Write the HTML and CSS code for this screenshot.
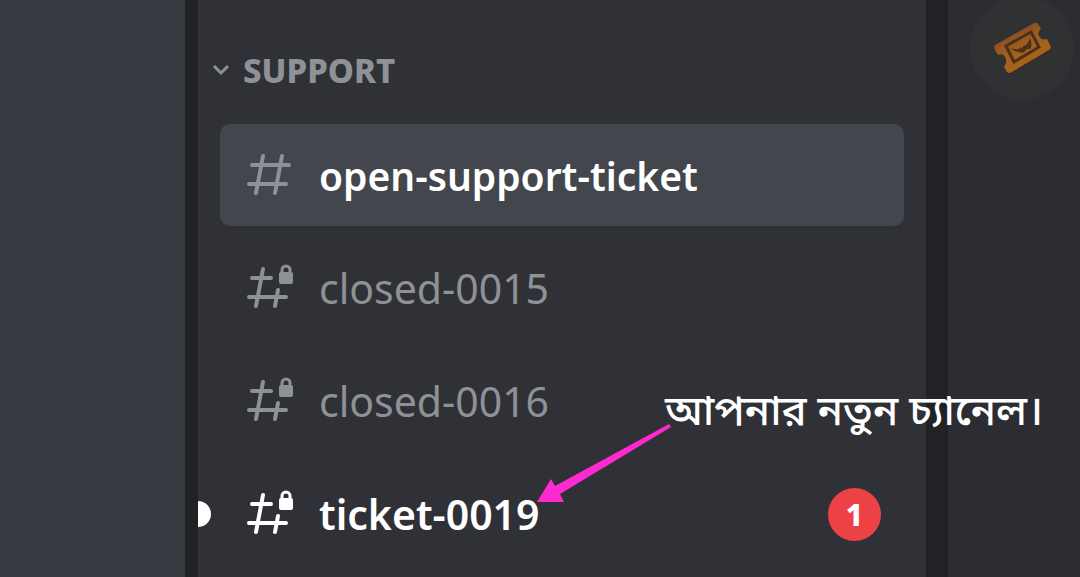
FILE: index.html
```
<!DOCTYPE html>
<html lang="bn">
<head>
    <meta charset="UTF-8">
    <meta name="viewport" content="width=device-width, initial-scale=1.0">
    <title>Support</title>
    <link rel="stylesheet" href="styles.css">
</head>
<body>
    <svg class="symbols" aria-hidden="true">
        <symbol id="hash" viewBox="0 0 48 48">
            <path d="M16 5L9 42M35 5L28 42M5 14H42M2 33H39" />
        </symbol>
        <symbol id="hash-lock" viewBox="0 0 48 48">
            <path d="M16 5L9 42M31 26L28 42M5 14H24M2 33H39" />
            <path d="M35 10V6a4 4 0 0 1 8 0v4" stroke-width="3" />
            <rect x="32" y="8" width="14" height="12" rx="2" fill="currentColor" stroke="none" />
        </symbol>
    </svg>

    <div class="app">
        <div class="servers"></div>

        <nav class="channels">
            <button class="category" type="button">
                <svg class="chevron" viewBox="0 0 18 12"><path d="M2 2L9 9L16 2" /></svg>
                SUPPORT
            </button>

            <a href="#" class="channel active">
                <svg class="icon"><use href="#hash" /></svg>
                <span class="name">open-support-ticket</span>
            </a>
            <a href="#" class="channel">
                <svg class="icon"><use href="#hash-lock" /></svg>
                <span class="name">closed-0015</span>
            </a>
            <a href="#" class="channel">
                <svg class="icon"><use href="#hash-lock" /></svg>
                <span class="name">closed-0016</span>
            </a>
            <a href="#" class="channel unread">
                <svg class="icon"><use href="#hash-lock" /></svg>
                <span class="name">ticket-0019</span>
                <span class="badge">1</span>
            </a>

            <!-- Note that points to the new channel -->
            <div class="note">
                <p class="note-text">আপনার নতুন চ্যানেল।</p>
                <svg class="arrow" viewBox="0 0 134 78"><path d="M0 78L14 55L18 62L132 0L134 3L23 70L27 78Z" /></svg>
            </div>
        </nav>

        <div class="chat">
            <svg class="logo" viewBox="0 0 104 104">
                <defs>
                    <linearGradient id="ticket" x1="0.3" y1="0.1" x2="0.6" y2="0.6">
                        <stop offset="0" stop-color="#7d442b" />
                        <stop offset="0.5" stop-color="#9a5a20" />
                        <stop offset="1" stop-color="#a3631b" />
                    </linearGradient>
                </defs>
                <circle cx="52" cy="52" r="52" fill="#2f3133" />
                <path d="M25 49L64 27Q67 26 68 28L71 33Q67 36 69 40Q72 45 77 43L81 51Q81 53 79 54L42 76Q39 78 37 76L34 71Q38 66 35 61Q33 57 28 59L24 52Q24 50 25 49Z" fill="#3b2a1e" transform="translate(1 1)" />
                <path d="M25 49L64 27Q67 26 68 28L71 33Q67 36 69 40Q72 45 77 43L81 51Q81 53 79 54L42 76Q39 78 37 76L34 71Q38 66 35 61Q33 57 28 59L24 52Q24 50 25 49Z" fill="url(#ticket)" />
                <path d="M36 50L61 36L69 51L44 66Z" fill="none" stroke="#4d3019" stroke-width="3" />
                <path d="M40 52Q46 54 49 53L50 51L52 53L53 50Q58 49 60 42Q63 50 60 53L57 53L53 57L48 56Q44 55 40 52Z" fill="#4d3019" />
            </svg>
        </div>
    </div>
</body>
</html>
```
FILE: styles.css
```
body {
    margin: 0;
    font-family: "Noto Sans", "Noto Sans Bengali", sans-serif;
    background-color: #2c2d32;
    color: #8e9196;
}
.symbols {
    position: absolute;
    width: 0;
    height: 0;
}
.app {
    display: grid;
    grid-template-columns: 185px 1fr 132px;
    min-height: 100vh;
}
.servers {
    background-color: #36393f;
}
.channels {
    position: relative;
    box-sizing: border-box;
    padding: 46px 22px 0;
    border-left: 13px solid #212226;
    border-right: 22px solid #212226;
    background-color: #303136;
}
.category {
    display: flex;
    align-items: center;
    gap: 13px;
    height: 48px;
    margin: 0 0 30px -8px;
    padding: 0;
    border: none;
    background: none;
    color: #8e9196;
    font: 800 33px "Noto Sans", sans-serif;
    cursor: pointer;
}
.chevron {
    width: 18px;
    height: 12px;
    fill: none;
    stroke: #8e9196;
    stroke-width: 3;
}
.channel {
    position: relative;
    display: flex;
    align-items: center;
    gap: 24px;
    box-sizing: border-box;
    height: 102px;
    margin-bottom: 11px;
    padding: 0 23px 0 27px;
    border-radius: 10px;
    color: #8e9196;
    font-size: 41px;
    text-decoration: none;
}
.channel:last-of-type {
    margin-bottom: 0;
}
.active {
    background-color: #43474d;
}
.icon {
    width: 48px;
    height: 48px;
    color: #8e9196;
    fill: none;
    stroke: currentColor;
    stroke-width: 4;
    stroke-linecap: round;
}
.name {
    flex: 1;
}
.active .name, .unread .name {
    color: #fff;
    font-weight: 600;
}
.active .name {
    font-size: 39px;
}
.unread .icon {
    color: #fff;
}
.unread::before {
    content: "";
    position: absolute;
    left: -22px;
    width: 13px;
    height: 26px;
    border-radius: 0 13px 13px 0;
    background-color: #fff;
}
.badge {
    width: 53px;
    border-radius: 50%;
    background-color: #ed4245;
    color: #fff;
    font-size: 30px;
    font-weight: 800;
    line-height: 53px;
    text-align: center;
}
.note {
    position: absolute;
    top: 394px;
    left: 339px;
}
.note-text {
    margin: 0 0 0 128px;
    color: #fff;
    font-size: 42px;
    font-weight: 500;
    line-height: 30px;
    white-space: nowrap;
}
.arrow {
    display: block;
    width: 134px;
    height: 78px;
    fill: #ff29d0;
}
.logo {
    display: block;
    width: 104px;
    height: 104px;
    margin: -4px auto 0 22px;
}
```
